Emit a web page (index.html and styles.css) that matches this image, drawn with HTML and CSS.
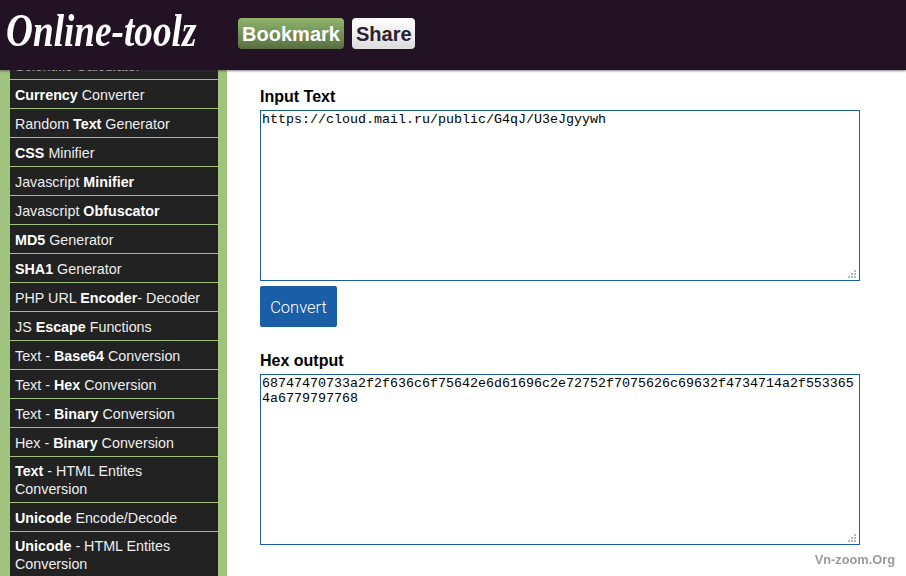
FILE: index.html
```html
<!DOCTYPE html>
<html lang="en">
<head>
<meta charset="utf-8">
<title>Online-toolz</title>
<link rel="stylesheet" href="styles.css">
</head>
<body>
<header class="topbar">
  <div class="logo"><span class="logo-text">Online-toolz</span></div>
  <div class="top-actions">
    <a class="btn-top btn-bookmark">Bookmark</a>
    <a class="btn-top btn-share">Share</a>
  </div>
</header>
<div class="page">
  <aside class="side">
    <ul class="menu">
      <li class="item">Scientific Calculator</li>
      <li class="item"><b>Currency</b> Converter</li>
      <li class="item">Random <b>Text</b> Generator</li>
      <li class="item"><b>CSS</b> Minifier</li>
      <li class="item">Javascript <b>Minifier</b></li>
      <li class="item">Javascript <b>Obfuscator</b></li>
      <li class="item"><b>MD5</b> Generator</li>
      <li class="item"><b>SHA1</b> Generator</li>
      <li class="item">PHP URL <b>Encoder</b>- Decoder</li>
      <li class="item">JS <b>Escape</b> Functions</li>
      <li class="item">Text - <b>Base64</b> Conversion</li>
      <li class="item">Text - <b>Hex</b> Conversion</li>
      <li class="item">Text - <b>Binary</b> Conversion</li>
      <li class="item">Hex - <b>Binary</b> Conversion</li>
      <li class="item item-two"><b>Text</b> - HTML Entites Conversion</li>
      <li class="item"><b>Unicode</b> Encode/Decode</li>
      <li class="item item-two"><b>Unicode</b> - HTML Entites Conversion</li>
    </ul>
  </aside>
  <main class="main">
    <label class="field-label">Input Text</label>
    <div class="field-wrap">
      <textarea class="field" spellcheck="false">https://cloud.mail.ru/public/G4qJ/U3eJgyywh</textarea>
      <svg class="grip" width="8" height="8" viewBox="0 0 8 8"><path d="M6 0h2v2H6zM3 3h2v2H3zM6 3h2v2H6zM0 6h2v2H0zM3 6h2v2H3zM6 6h2v2H6z"/></svg>
    </div>
    <button class="convert">Convert</button>
    <label class="field-label field-label-second">Hex output</label>
    <div class="field-wrap">
      <textarea class="field" spellcheck="false">68747470733a2f2f636c6f75642e6d61696c2e72752f7075626c69632f4734714a2f5533654a6779797768</textarea>
      <svg class="grip" width="8" height="8" viewBox="0 0 8 8"><path d="M6 0h2v2H6zM3 3h2v2H3zM6 3h2v2H6zM0 6h2v2H0zM3 6h2v2H3zM6 6h2v2H6z"/></svg>
    </div>
  </main>
</div>
<div class="watermark">Vn-zoom.Org</div>
</body>
</html>
```

FILE: styles.css
```css
* { box-sizing: border-box; }
html, body { margin: 0; height: 100%; overflow: hidden; }
body { background: #fff; font-family: "Liberation Sans", Arial, sans-serif; color: #000; position: relative; }

.topbar {
  position: absolute; top: 0; left: 0; right: 0; height: 70px; z-index: 2;
  background: #231223;
  box-shadow: 0 1px 2px rgba(60, 40, 60, .6);
  display: flex; align-items: flex-start;
}
.logo {
  width: 238px; padding: 6px 0 0 6px;
  font-family: "Liberation Serif", serif; font-style: italic; font-weight: bold;
  font-size: 46px; line-height: 50px; color: #fff; white-space: nowrap;
}
.logo-text { display: inline-block; transform: scaleX(.81); transform-origin: left center; }
.top-actions { display: flex; gap: 8px; padding-top: 18px; }
.btn-top {
  height: 31px; border-radius: 4px; font-size: 20px; font-weight: bold; line-height: 32px;
  padding: 0 4px; text-align: center;
}
.btn-bookmark { width: 106px; color: #fff; background: linear-gradient(#92b56d, #566e41); }
.btn-share { width: 63px; color: #2a2030; background: linear-gradient(#fff, #dcdcdc); }

.page { display: flex; height: 576px; }
.side {
  width: 227px; height: 576px; overflow: hidden; flex: none;
  background: #a0c47d; padding: 51px 9px 0 10px;
}
.menu { list-style: none; margin: 0; padding: 0; background: #222; }
.item {
  height: 29px; line-height: 30px; padding: 0 5px;
  border-bottom: 1px solid #a0c47d;
  color: #eee; font-size: 14.3px; white-space: nowrap;
}
.item b { color: #fff; }
.item-two { height: 46px; line-height: 18px; padding: 5px 5px 4px; white-space: normal; }

.main { flex: none; width: 633px; padding: 87px 0 0 33px; display: flex; flex-direction: column; align-items: flex-start; }
.field-label { font-size: 16px; font-weight: bold; line-height: 20px; margin-bottom: 3px; }
.field-label-second { margin-top: 24px; }
.field-wrap { position: relative; width: 600px; height: 171px; }
.field {
  display: block; width: 100%; height: 100%; margin: 0; padding: 1px; resize: none;
  border: 1px solid #1a5ea8; border-radius: 0; outline: none; background: #fff; color: #000;
  font-family: "Liberation Mono", "Courier New", monospace; font-size: 13.33px; line-height: 15px;
}
.grip { position: absolute; right: 4px; bottom: 3px; fill: #b8b8b8; }
.convert {
  margin-top: 5px; width: 77px; height: 41px; border: 0; border-radius: 2px;
  background: #1a5ea8; color: #fff; padding: 2px 0 0;
  font-family: Roboto, sans-serif; font-weight: 300; font-size: 16.5px;
}
.watermark {
  position: absolute; right: 11px; top: 552px; z-index: 3;
  font-size: 12.8px; line-height: 16px; color: #9a9a9a; font-weight: bold; filter: blur(.4px);
}
```
